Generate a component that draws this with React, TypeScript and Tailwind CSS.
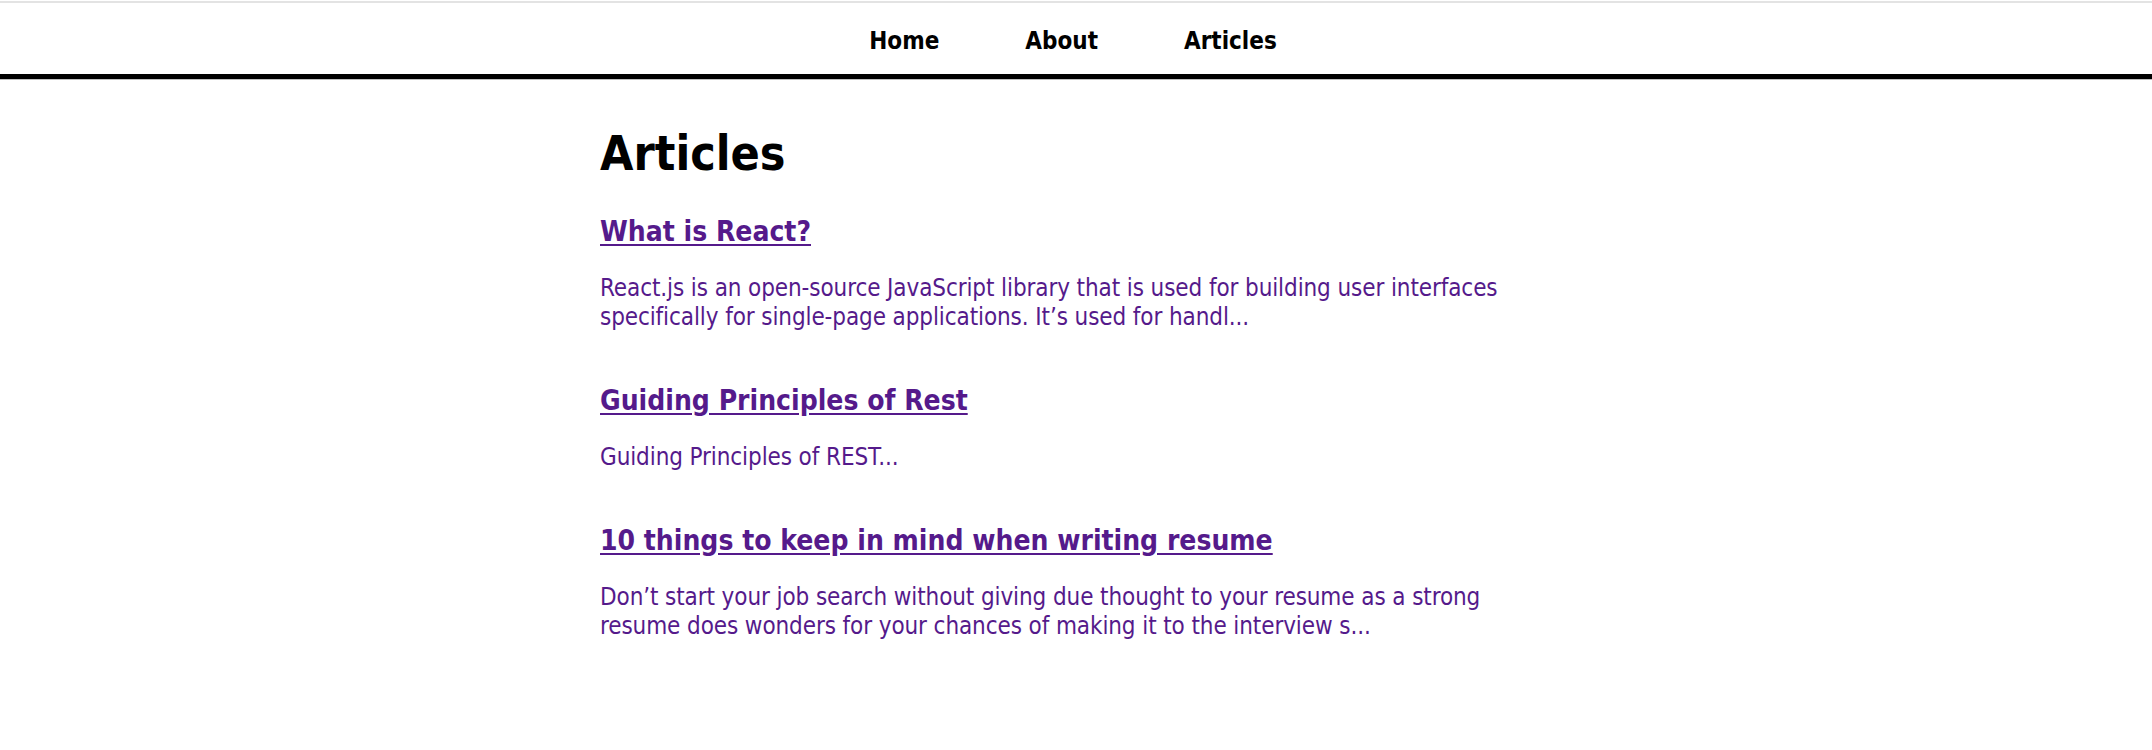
const articles = [
  {
    title: "What is React?",
    excerpt:
      "React.js is an open-source JavaScript library that is used for building user interfaces specifically for single-page applications. It\u2019s used for handl...",
  },
  {
    title: "Guiding Principles of Rest",
    excerpt: "Guiding Principles of REST...",
  },
  {
    title: "10 things to keep in mind when writing resume",
    excerpt:
      "Don\u2019t start your job search without giving due thought to your resume as a strong resume does wonders for your chances of making it to the interview s...",
  },
];

const App = () => {
  return (
    <div className="min-h-screen w-full bg-white pt-px font-['DejaVu_Sans_Condensed','DejaVu_Sans',sans-serif] font-stretch-condensed text-black">
      <nav className="border-t-2 border-[#e3e3e3]">
        <div className="flex h-[76px] items-center justify-center gap-[86px] pt-[6px] pr-[6px] border-b-[5px] border-black">
          <a href="#" className="text-[24px] leading-[29px] font-bold">
            Home
          </a>
          <a href="#" className="text-[24px] leading-[29px] font-bold">
            About
          </a>
          <a href="#" className="text-[24px] leading-[29px] font-bold">
            Articles
          </a>
        </div>
        <div className="h-px bg-[#bdbdbd]" />
      </nav>

      <main className="mx-auto w-[952px] pt-[44px] pb-16">
        <h1 className="text-[48px] leading-[58px] font-bold">Articles</h1>
        <div className="mt-[33px] flex flex-col gap-[52px]">
          {articles.map((article) => (
            <a href="#" key={article.title} className="block text-[#551a8b]">
              <h3 className="text-[28px] leading-[34px] font-bold underline underline-offset-[3px]">
                {article.title}
              </h3>
              <p className="mt-[25px] text-[24px] leading-[29px] tracking-[-0.1px]">
                {article.excerpt}
              </p>
            </a>
          ))}
        </div>
      </main>
    </div>
  );
};

export default App;
